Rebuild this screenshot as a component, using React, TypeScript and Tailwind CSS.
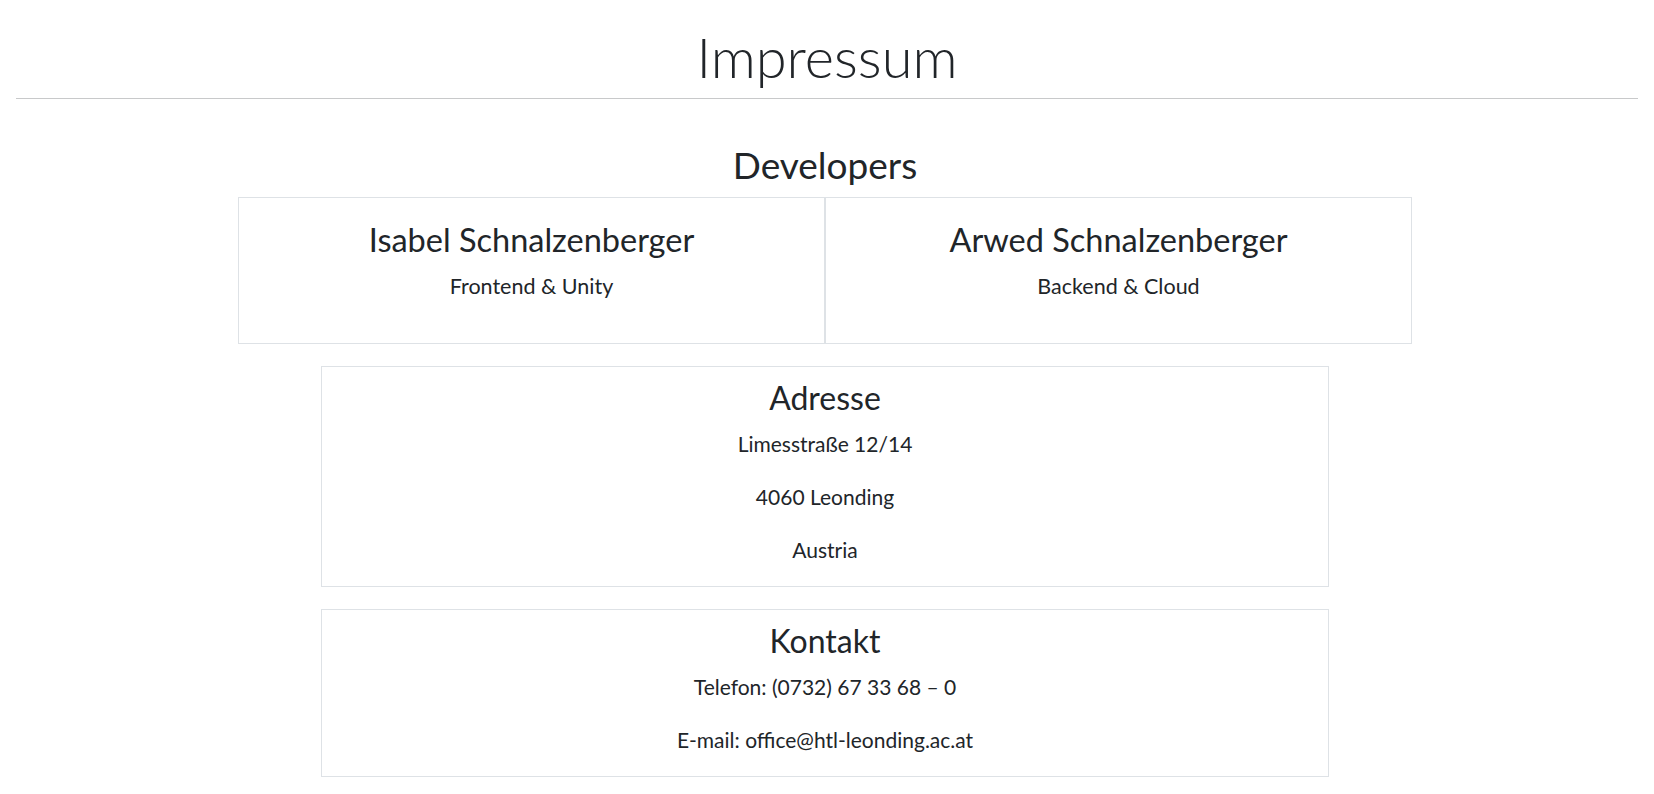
import React from 'react'

const developers = [
  { name: 'Isabel Schnalzenberger', role: 'Frontend & Unity' },
  { name: 'Arwed Schnalzenberger', role: 'Backend & Cloud' },
]

function InfoCard({ title, lines, height }: { title: string; lines: string[]; height: string }) {
  return (
    <div className={`w-[1008px] border border-[#dee2e6] pt-[12px] text-center ${height}`}>
      <h3 className="text-[32px] leading-[38px] font-normal">{title}</h3>
      <div className="mt-[15px] flex flex-col gap-[29px]">
        {lines.map((l) => (
          <p key={l} className="text-[21px] leading-[24px]">
            {l}
          </p>
        ))}
      </div>
    </div>
  )
}

export default function App() {
  return (
    <div className="min-h-screen bg-white text-[#212529] font-['Lato','Noto_Sans',sans-serif]">
      <header className="pt-[23px] text-center">
        <h1 className="text-[56px] leading-[67px] font-light">Impressum</h1>
      </header>
      <hr className="mx-4 mt-[8px] border-0 h-px bg-[#c8c9ca]" />

      <main className="w-[1650px] flex flex-col items-center">
        <h2 className="mt-[44px] text-[37px] leading-[44px] font-normal">Developers</h2>

        <div className="mt-[10px] flex w-[1174px]">
          {developers.map((d) => (
            <div key={d.name} className="flex-1 h-[147px] border border-[#dee2e6] pt-[23px] text-center">
              <h3 className="text-[32.5px] leading-[38px] font-normal">{d.name}</h3>
              <p className="mt-[15px] text-[21.5px] leading-[24px]">{d.role}</p>
            </div>
          ))}
        </div>

        <div className="mt-[22px]">
          <InfoCard title="Adresse" lines={['Limesstraße 12/14', '4060 Leonding', 'Austria']} height="h-[221px]" />
        </div>
        <div className="mt-[22px]">
          <InfoCard title="Kontakt" lines={['Telefon: (0732) 67 33 68 – 0', 'E-mail: office@htl-leonding.ac.at']} height="h-[168px]" />
        </div>
      </main>
    </div>
  )
}
